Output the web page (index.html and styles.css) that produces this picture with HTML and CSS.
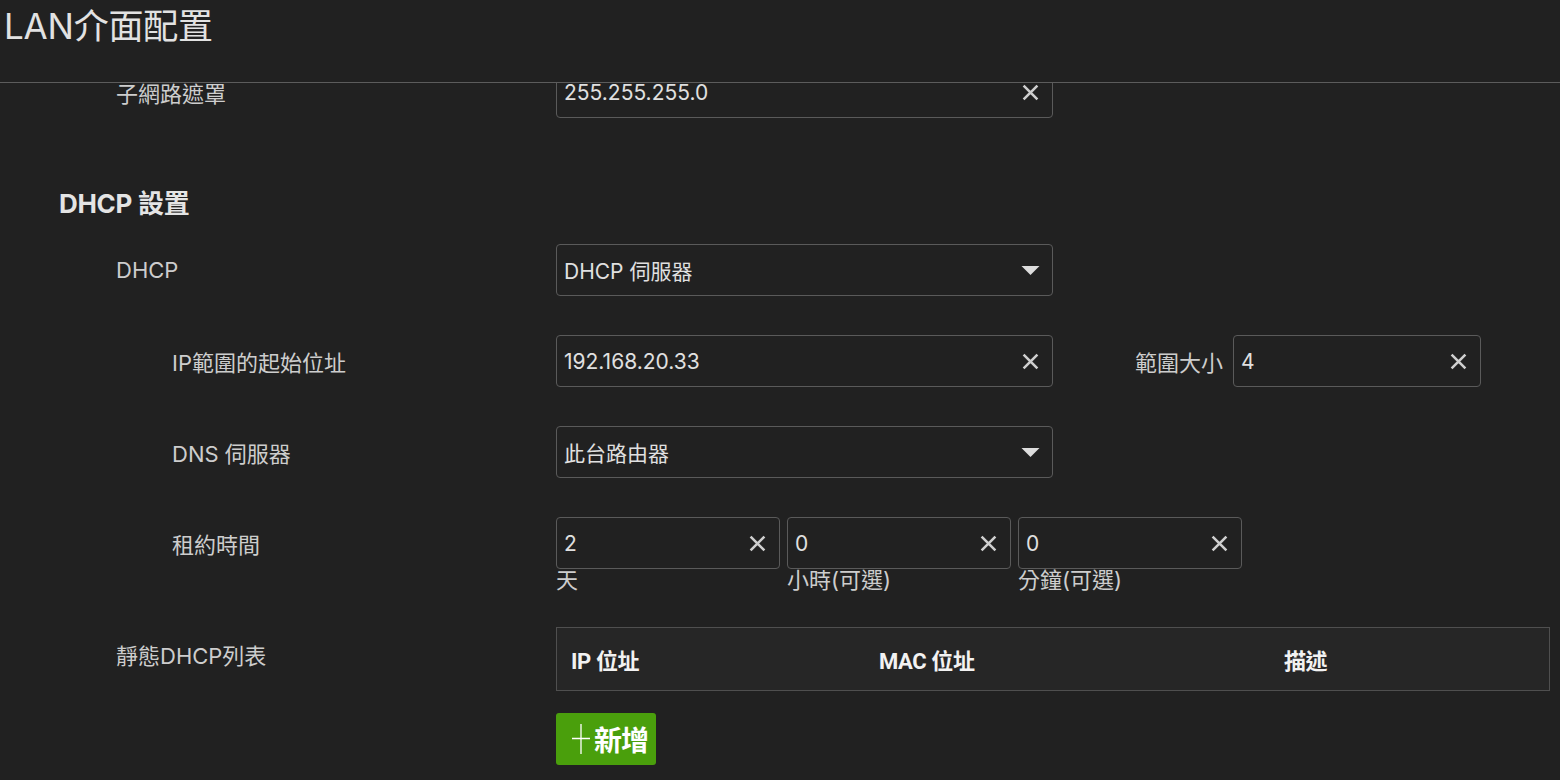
FILE: index.html
```html
<!DOCTYPE html>
<html lang="zh-Hant">
<head>
<meta charset="utf-8">
<title>LAN介面配置</title>
<link rel="stylesheet" href="styles.css">
</head>
<body>
<header class="topbar">
  <h1 class="title">LAN介面配置</h1>
</header>
<main class="content">
  <div class="row">
    <div class="label lvl1">子網路遮罩</div>
    <div class="field wide"><span class="val">255.255.255.0</span><svg class="clear" viewBox="0 0 16 16"><path d="M1.5 1.5L14.5 14.5M14.5 1.5L1.5 14.5"/></svg></div>
  </div>

  <h2 class="section">DHCP 設置</h2>

  <div class="row">
    <div class="label lvl1">DHCP</div>
    <div class="field wide"><span class="val">DHCP 伺服器</span><svg class="caret" viewBox="0 0 18 9"><path d="M0 0H18L9 9Z"/></svg></div>
  </div>

  <div class="row gap">
    <div class="label lvl2">IP範圍的起始位址</div>
    <div class="field wide"><span class="val">192.168.20.33</span><svg class="clear" viewBox="0 0 16 16"><path d="M1.5 1.5L14.5 14.5M14.5 1.5L1.5 14.5"/></svg></div>
    <div class="sizelabel">範圍大小</div>
    <div class="field small"><span class="val">4</span><svg class="clear" viewBox="0 0 16 16"><path d="M1.5 1.5L14.5 14.5M14.5 1.5L1.5 14.5"/></svg></div>
  </div>

  <div class="row gap">
    <div class="label lvl2">DNS 伺服器</div>
    <div class="field wide"><span class="val">此台路由器</span><svg class="caret" viewBox="0 0 18 9"><path d="M0 0H18L9 9Z"/></svg></div>
  </div>

  <div class="row gap top">
    <div class="label lvl2">租約時間</div>
    <div class="lease">
      <div class="leasecol">
        <div class="field lease-f"><span class="val">2</span><svg class="clear" viewBox="0 0 16 16"><path d="M1.5 1.5L14.5 14.5M14.5 1.5L1.5 14.5"/></svg></div>
        <div class="caption">天</div>
      </div>
      <div class="leasecol">
        <div class="field lease-f"><span class="val">0</span><svg class="clear" viewBox="0 0 16 16"><path d="M1.5 1.5L14.5 14.5M14.5 1.5L1.5 14.5"/></svg></div>
        <div class="caption">小時(可選)</div>
      </div>
      <div class="leasecol">
        <div class="field lease-f"><span class="val">0</span><svg class="clear" viewBox="0 0 16 16"><path d="M1.5 1.5L14.5 14.5M14.5 1.5L1.5 14.5"/></svg></div>
        <div class="caption">分鐘(可選)</div>
      </div>
    </div>
  </div>

  <div class="row top static">
    <div class="label lvl1 statlabel">靜態DHCP列表</div>
    <div class="tablewrap">
      <div class="thead">
        <div class="th c1">IP 位址</div>
        <div class="th c2">MAC 位址</div>
        <div class="th c3">描述</div>
      </div>
      <button class="addbtn"><svg class="plus" viewBox="0 0 18 30"><path d="M0 14.5H18M9 0V30"/></svg>新增</button>
    </div>
  </div>
</main>
</body>
</html>
```
FILE: styles.css
```css
* { box-sizing: border-box; }
html, body { margin: 0; padding: 0; }
body {
  background: #212121;
  color: #d2d2d2;
  font-family: Inter, "Noto Sans CJK TC", sans-serif;
  width: 1560px;
  height: 780px;
  overflow: hidden;
  position: relative;
}
.topbar {
  position: absolute;
  top: 0; left: 0; right: 0;
  height: 83px;
  background: #212121;
  border-bottom: 1px solid #5c5c5c;
  z-index: 5;
}
.title {
  margin: 0;
  padding: 4px 0 0 4px;
  font-size: 35px;
  font-weight: 400;
  line-height: 44px;
  color: #e2e2e2;
  letter-spacing: -0.2px;
}
.content {
  padding-top: 66px;
  display: flex;
  flex-direction: column;
}
.row {
  display: flex;
  align-items: center;
}
.row.gap { margin-top: 39px; }
.row.top { align-items: flex-start; }
.label {
  width: 556px;
  height: 52px;
  display: flex;
  align-items: center;
  font-size: 22px;
  color: #cdcdcd;
  flex: none;
}
.lvl1 { padding-left: 116px; }
.lvl2 { padding-left: 172px; }
.section {
  margin: 71px 0 25px 59px;
  height: 30px;
  line-height: 30px;
  font-size: 26px;
  font-weight: 700;
  color: #e4e4e4;
  letter-spacing: -0.3px;
}
.field {
  height: 52px;
  border: 1px solid #5a5a5a;
  border-radius: 4px;
  display: flex;
  align-items: center;
  justify-content: space-between;
  padding: 0 13px 0 7px;
  font-size: 21px;
  color: #e0e0e0;
  flex: none;
}
.wide { width: 497px; }
.small { width: 248px; }
.lease-f { width: 224px; }
.clear {
  width: 17px; height: 17px;
  stroke: #cfcfcf;
  stroke-width: 2.4;
  fill: none;
}
.caret {
  width: 19px; height: 9px;
  fill: #dddddd;
  margin-right: -1px;
}
.sizelabel {
  margin-left: 82px;
  margin-right: 10px;
  font-size: 22px;
  color: #cdcdcd;
}
.lease {
  display: flex;
  gap: 7px;
}
.leasecol {
  display: flex;
  flex-direction: column;
}
.caption {
  font-size: 22px;
  line-height: 22px;
  color: #cdcdcd;
}
.static { margin-top: 36px; }
.statlabel { height: 54px; }
.tablewrap {
  display: flex;
  flex-direction: column;
  align-items: flex-start;
}
.thead {
  width: 994px;
  height: 64px;
  background: #262626;
  border: 1px solid #4f4f4f;
  display: flex;
  align-items: center;
  font-family: Roboto, "Noto Sans CJK TC", sans-serif;
  font-weight: 700;
  font-size: 22px;
  color: #f2f2f2;
  letter-spacing: -0.4px;
}
.th.c1 { width: 322px; padding-left: 14px; }
.th.c2 { width: 405px; }
.th.c3 { flex: 1; }
.addbtn {
  margin-top: 22px;
  width: 100px;
  height: 52px;
  background: #4a9f0c;
  border: none;
  border-radius: 3px;
  color: #ffffff;
  font-family: Roboto, "Noto Sans CJK TC", sans-serif;
  font-size: 28px;
  font-weight: 700;
  letter-spacing: -1px;
  padding: 0 0 0 16px;
  display: flex;
  align-items: center;
}
.plus {
  width: 18px;
  height: 30px;
  stroke: #ffffff;
  stroke-width: 1.3;
  fill: none;
  margin-right: 4px;
  flex: none;
}
```
